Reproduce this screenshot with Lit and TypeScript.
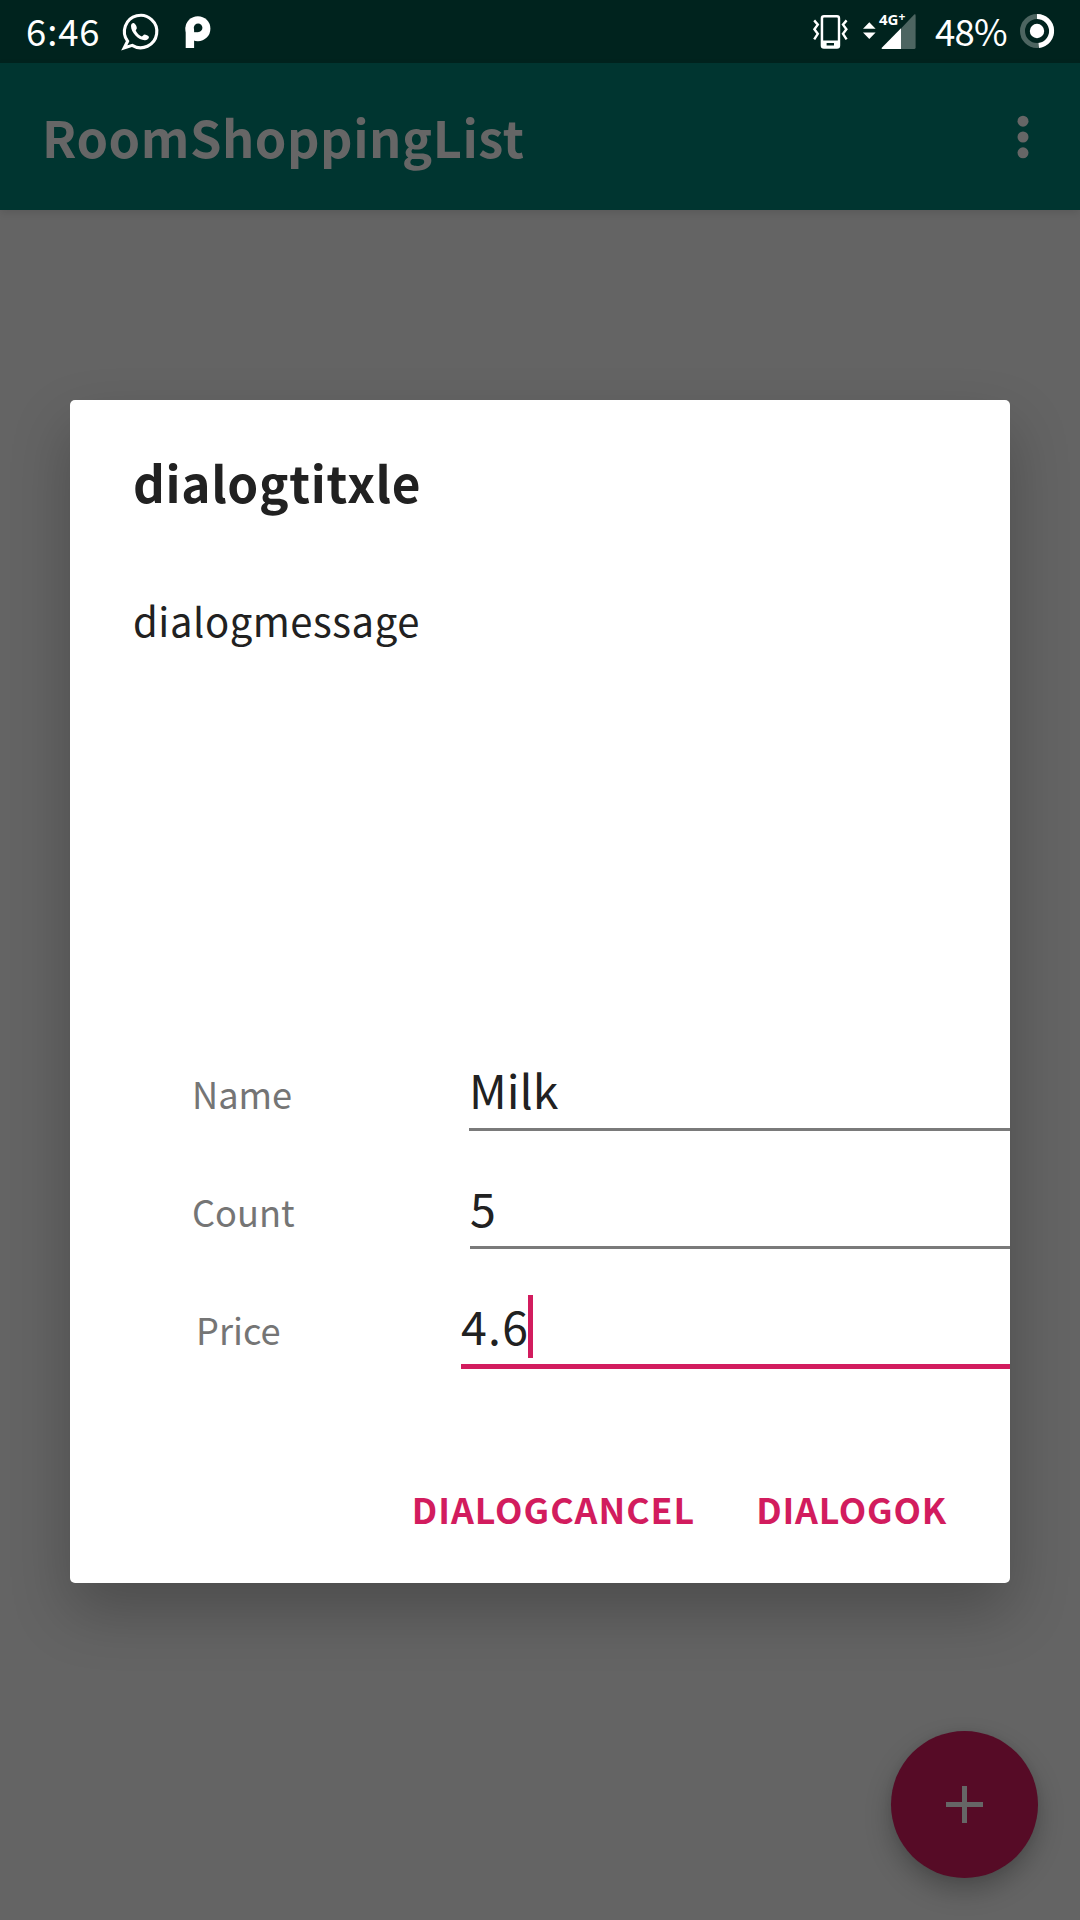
import { LitElement, html, css } from "lit";
import { customElement } from "lit/decorators.js";

@customElement("status-bar")
class StatusBar extends LitElement {
  static styles = css`
    :host {
      display: flex;
      justify-content: space-between;
      height: 63px;
      box-sizing: border-box;
      padding: 0 24px 0 26px;
      background: #00231e;
      color: #fff;
      font-size: 36.5px;
      line-height: 62px;
    }
    .group { display: flex; align-items: flex-start; height: 60px; }
    svg { display: block; flex: none; }
    .time { letter-spacing: 0.9px; width: 94px; }
    .percent { letter-spacing: -0.8px; width: 83px; }
    .chat { margin-right: 24px; }
    .vibrate { margin-right: 10px; }
    .signal { margin-right: 18px; }
    .net { font: 700 15px "Open Sans", sans-serif; }
    .plus { font: 700 12px "Open Sans", sans-serif; }
  `;
  render() {
    return html`
      <div class="group">
        <span class="time">6:46</span>
        <svg class="chat" width="40" height="60" viewBox="120 0 40 60">
          <path d="M127.6 41.2 L124.2 48 L132.2 45.4 A16.2 16.2 0 1 0 127.6 41.2 Z" fill="none" stroke="#fff" stroke-width="3.1" />
          <path d="M131 26 C131 24 132.6 22.6 134.2 23.2 C135.6 24 137 26.8 136.8 28.2 C136.7 29.2 135.6 29.8 135.8 30.8 C137 33.4 139.3 35.4 141.8 36.4 C142.8 36.4 143.5 34.7 144.5 34.6 C145.6 34.7 148.6 36 149 36.9 C149 38.5 147 40 145 40.2 C138.5 40.4 131 32.5 131 26 Z" fill="#fff" />
        </svg>
        <svg width="28" height="60" viewBox="184 0 28 60">
          <circle cx="197.9" cy="28.7" r="12.5" fill="#fff" />
          <rect x="185.7" y="27" width="8.4" height="21" fill="#fff" />
          <circle cx="198.1" cy="27.8" r="4.3" fill="#00231e" />
          <rect x="194.1" y="28" width="4.2" height="4.2" fill="#00231e" />
        </svg>
      </div>
      <div class="group">
        <svg class="vibrate" width="40" height="60" viewBox="810 0 40 60">
          <path fill-rule="evenodd" fill="#fff" d="M824 15 H837 Q840.2 15 840.2 18.2 V45.5 Q840.2 48.7 837 48.7 H824 Q820.7 48.7 820.7 45.5 V18.2 Q820.7 15 824 15 Z M823.2 18.2 V40.6 H837.8 V18.2 Q837.8 17.4 837 17.4 H824 Q823.2 17.4 823.2 18.2 Z M826.6 43 V45.4 H834 V43 Z" />
          <path fill="none" stroke="#fff" stroke-width="2.4" d="M814.2 20.4 L817.8 24.6 L814.4 29.2 L817.8 33.8 L814.2 39.4 M846.6 20.4 L843 24.6 L846.4 29.2 L843 33.8 L846.6 39.4" />
        </svg>
        <svg class="signal" width="57" height="60" viewBox="860 0 57 60">
          <path fill="#fff" d="M863 28.8 L869.3 22.3 L875.6 28.8 Z M863 32.4 H875.6 L869.3 39 Z" />
          <path fill="#4d6561" d="M901 28.4 L914.2 14.6 Q915.6 13.6 915.6 15.6 V47.4 Q915.6 49 914 49 H901 Z" />
          <path fill="#fff" d="M901 28.2 V49 H882.4 Q881 49 881.8 47.8 Z" />
          <text class="net" fill="#fff" x="879" y="25.2" textLength="19.5" lengthAdjust="spacingAndGlyphs">4G</text>
          <text class="plus" fill="#fff" x="898.4" y="21.4">+</text>
        </svg>
        <span class="percent">48%</span>
        <svg width="38" height="60" viewBox="1018 0 38 60">
          <circle cx="1037" cy="31" r="14.5" fill="none" stroke="#4d6561" stroke-width="5" />
          <path d="M1037 16.5 A14.5 14.5 0 0 1 1038.8 45.4" fill="none" stroke="#fff" stroke-width="5" />
          <circle cx="1037" cy="31" r="7.2" fill="#fff" />
        </svg>
      </div>
    `;
  }
}

@customElement("item-dialog")
class ItemDialog extends LitElement {
  static styles = css`
    :host {
      display: flex;
      flex-direction: column;
      box-sizing: border-box;
      width: 940px;
      height: 1183px;
      padding-top: 52px;
      background: #fff;
      border-radius: 5px;
      box-shadow: 0 28px 60px rgba(0, 0, 0, 0.24);
      color: #212121;
      line-height: 60px;
    }
    .title { margin: 0 0 78px 63px; font-size: 49.5px; font-weight: 700; letter-spacing: 0.65px; }
    .message { margin: 0 0 390px 63px; font-size: 40px; letter-spacing: 0.55px; }
    .form { display: flex; flex-direction: column; gap: 27px; }
    .row { display: flex; align-items: baseline; height: 91px; padding-left: 122px; }
    .row:last-child { height: 93px; padding-left: 126px; }
    .label { width: 277px; color: #757575; font-size: 36.2px; }
    .count .label { width: 278px; }
    .price .label { width: 265px; }
    .field {
      position: relative;
      flex: 1;
      padding: 19px 0 9px;
      border-bottom: 3px solid #7a7a7a;
      font-size: 46.5px;
    }
    .price .field { border-bottom: 5px solid #d21c5e; letter-spacing: 1.2px; }
    .cursor { position: absolute; left: 67px; top: 19px; width: 5px; height: 63px; background: #d21c5e; }
    .actions {
      display: flex;
      justify-content: flex-end;
      gap: 61px;
      margin-top: 110px;
      padding-right: 63px;
      color: #d21c5e;
      font-size: 35.7px;
      font-weight: 700;
    }
    .cancel { letter-spacing: 1px; }
    .ok { letter-spacing: 0.8px; }
  `;
  render() {
    return html`
      <div class="title">dialogtitxle</div>
      <div class="message">dialogmessage</div>
      <div class="form">
        <div class="row"><span class="label">Name</span><div class="field">Milk</div></div>
        <div class="row count"><span class="label">Count</span><div class="field">5</div></div>
        <div class="row price">
          <span class="label">Price</span>
          <div class="field">4.6<span class="cursor"></span></div>
        </div>
      </div>
      <div class="actions"><span class="cancel">DIALOGCANCEL</span><span class="ok">DIALOGOK</span></div>
    `;
  }
}

@customElement("app-root")
class AppRoot extends LitElement {
  static styles = css`
    :host {
      display: flex;
      flex-direction: column;
      position: relative;
      width: 1080px;
      height: 1920px;
      overflow: hidden;
      background: #646464;
      font-family: "Noto Sans CJK SC", sans-serif;
    }
    .appbar {
      display: flex;
      align-items: center;
      justify-content: space-between;
      box-sizing: border-box;
      height: 147px;
      padding: 0 46px 0 42px;
      background: #003530;
      box-shadow: 0 3px 8px rgba(0, 0, 0, 0.1);
      color: #666;
    }
    .name { padding-bottom: 2px; font-size: 50.5px; font-weight: 700; line-height: 60px; letter-spacing: 0.55px; }
    .more { display: block; }
    .content { display: flex; justify-content: center; padding-top: 190px; }
    .fab {
      position: absolute;
      left: 891px;
      top: 1731px;
      display: flex;
      align-items: center;
      justify-content: center;
      width: 147px;
      height: 147px;
      border-radius: 50%;
      background: #560b26;
      box-shadow: 0 12px 26px rgba(0, 0, 0, 0.26), 0 0 8px rgba(0, 0, 0, 0.06);
    }
  `;
  render() {
    return html`
      <status-bar></status-bar>
      <div class="appbar">
        <span class="name">RoomShoppingList</span>
        <svg class="more" width="22" height="60" viewBox="0 0 22 60" fill="#666">
          <circle cx="11" cy="14.2" r="5.5" />
          <circle cx="11" cy="30" r="5.5" />
          <circle cx="11" cy="45.8" r="5.5" />
        </svg>
      </div>
      <div class="content"><item-dialog></item-dialog></div>
      <div class="fab">
        <svg width="37" height="37" viewBox="0 0 37 37"><path d="M16 0 H21 V16 H37 V21 H21 V37 H16 V21 H0 V16 H16 Z" fill="#666" /></svg>
      </div>
    `;
  }
}
